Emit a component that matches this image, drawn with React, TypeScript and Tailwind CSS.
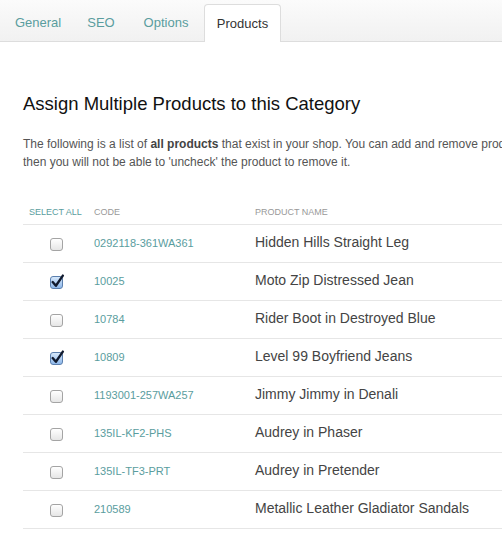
import React from "react";

const tabs = [
  { label: "General", w: "w-[72px]" },
  { label: "SEO", w: "w-[54px]" },
  { label: "Options", w: "w-[76px]" },
];

const products = [
  { code: "0292118-361WA361", name: "Hidden Hills Straight Leg", checked: false },
  { code: "10025", name: "Moto Zip Distressed Jean", checked: true },
  { code: "10784", name: "Rider Boot in Destroyed Blue", checked: false },
  { code: "10809", name: "Level 99 Boyfriend Jeans", checked: true },
  { code: "1193001-257WA257", name: "Jimmy Jimmy in Denali", checked: false },
  { code: "135IL-KF2-PHS", name: "Audrey in Phaser", checked: false },
  { code: "135IL-TF3-PRT", name: "Audrey in Pretender", checked: false },
  { code: "210589", name: "Metallic Leather Gladiator Sandals", checked: false },
];

function Check({ checked }: { checked: boolean }) {
  if (checked) {
    return (
      <span className="relative inline-block h-[13px] w-[13px] rounded-[3px] border border-[#5b7fae] bg-gradient-to-b from-[#d6e8fb] to-[#8fb8ea]">
        <svg viewBox="0 0 14 14" className="absolute -left-[1px] -top-[3px] h-[15px] w-[15px]">
          <path d="M2.5 7.5 L5.5 11 L12 1.5" fill="none" stroke="#111a2e" strokeWidth="2.2" strokeLinecap="round" strokeLinejoin="round" />
        </svg>
      </span>
    );
  }
  return (
    <span className="inline-block h-[13px] w-[13px] rounded-[3px] border border-[#a4a4a4] bg-gradient-to-b from-[#ffffff] to-[#e6e6e6]" />
  );
}

export default function App() {
  const [rows, setRows] = React.useState(products);

  return (
    <div className="h-[534px] w-[502px] overflow-hidden bg-white font-['Liberation_Sans',Arial,sans-serif]">
      <div className="flex h-[42px] items-end border-b border-[#dddddd] bg-gradient-to-b from-[#fbfbfb] to-[#f1f1f1] pl-[2px]">
        {tabs.map((t) => (
          <div key={t.label} className={`${t.w} flex h-[37px] items-center justify-center text-[13px] text-[#5a9d9e]`}>
            {t.label}
          </div>
        ))}
        <div className="-mb-px flex h-[38px] w-[77px] items-center justify-center rounded-t-[4px] border border-b-0 border-[#dddddd] bg-white text-[13px] text-[#333333]">
          Products
        </div>
      </div>

      <div className="pl-[23px]">
        <h2 className="mt-[51px] whitespace-nowrap text-[18.5px] leading-[22px] text-[#111111]">
          Assign Multiple Products to this Category
        </h2>
        <p className="mt-[20px] whitespace-nowrap text-[12px] leading-[18px] text-[#555555]">
          The following is a list of <b className="text-[#444444]">all products</b> that exist in your shop. You can add and remove products
          <br />
          then you will not be able to 'uncheck' the product to remove it.
        </p>

        <div className="mt-[31px] w-[520px]">
          <div className="flex h-[23px] items-center border-b border-[#e6e6e6] text-[9px] uppercase">
            <div className="w-[66px] pl-[6px] text-[#5a9d9e]">Select All</div>
            <div className="w-[166px] pl-[5px] text-[#999999]">Code</div>
            <div className="text-[#999999]">Product Name</div>
          </div>
          {rows.map((r, i) => (
            <div key={r.code} className="flex h-[38px] items-center border-b border-[#e6e6e6]">
              <div
                className="flex w-[66px] cursor-pointer justify-center pt-[1px]"
                onClick={() => setRows(rows.map((x, j) => (j === i ? { ...x, checked: !x.checked } : x)))}
              >
                <Check checked={r.checked} />
              </div>
              <div className="w-[166px] pl-[5px] text-[11px] text-[#5a9d9e]">{r.code}</div>
              <div className="whitespace-nowrap pb-[2px] text-[14px] text-[#444444]">{r.name}</div>
            </div>
          ))}
        </div>
      </div>
    </div>
  );
}
